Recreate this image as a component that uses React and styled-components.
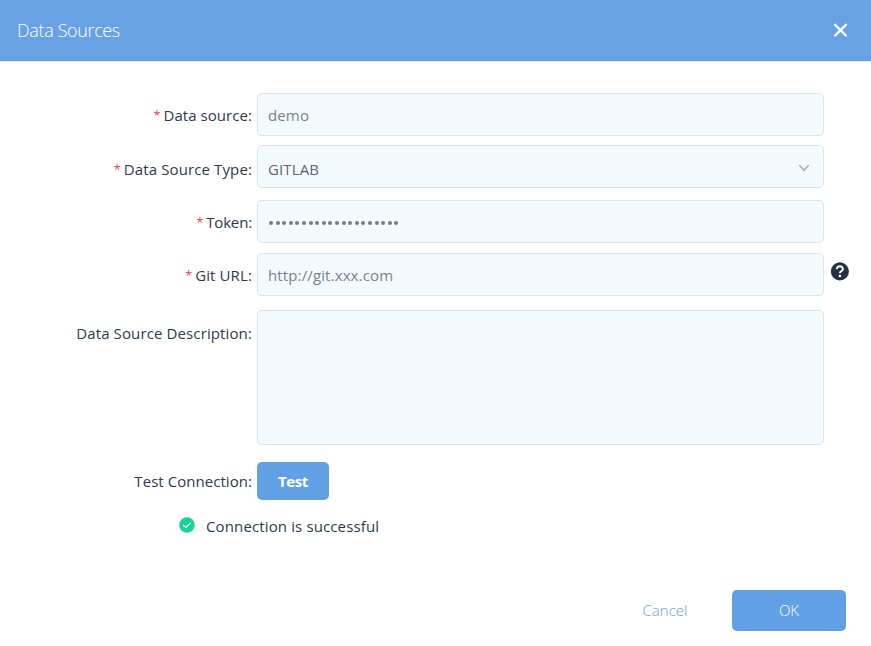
import React from "react";
import styled, { createGlobalStyle } from "styled-components";

const GlobalStyle = createGlobalStyle`
  * { box-sizing: border-box; }
  body { margin: 0; background: #fff; }
  button, input, textarea { font: inherit; }
`;

const Dialog = styled.div`
  display: flex;
  flex-direction: column;
  width: 871px;
  height: 646px;
  background: #fff;
  color: #2c3a4e;
  font-family: "Segoe UI", "Open Sans", "Noto Sans", sans-serif;
  font-size: 15px;
  font-weight: 370;
  overflow: hidden;
`;

const Header = styled.header`
  display: flex;
  align-items: center;
  justify-content: space-between;
  height: 62px;
  flex: none;
  padding: 0 23px 1px 17px;
  background: #69a1e5;
  border-bottom: 1px solid #e1eaf6;
`;

const Title = styled.h1`
  margin: 0;
  color: #fff;
  font-size: 18px;
  font-weight: 340;
  line-height: 24px;
  letter-spacing: -0.37px;
`;

const IconButton = styled.button`
  display: flex;
  padding: 0;
  border: 0;
  background: none;
`;

const Form = styled.form`
  display: flex;
  flex-direction: column;
  padding-top: 31px;
`;

const Row = styled.div`
  display: grid;
  grid-template-columns: 252px 567px 20px;
  column-gap: 5px;
  align-items: start;
  margin-bottom: ${(p) => p.$gap}px;
`;

const Label = styled.label`
  display: flex;
  justify-content: flex-end;
  padding-top: ${(p) => p.$top}px;
  line-height: 22px;
  letter-spacing: ${(p) => p.$track ?? 0.12}px;
  white-space: nowrap;
`;

const Required = styled.span`
  margin-right: 3px;
  color: #ff4040;
  font-size: 12.5px;
  line-height: 24px;
`;

const Field = styled.div`
  display: flex;
  align-items: center;
  justify-content: space-between;
  height: ${(p) => p.$height || 43}px;
  padding: ${(p) => p.$top || 1}px 13px 0 10px;
  border: 1px solid #d9e3f0;
  border-radius: 5px;
  background: #f5faff;
  color: ${(p) => p.$color || "#78818f"};
  letter-spacing: 0.13px;
`;

const Arrow = styled.span`
  display: flex;
  margin-bottom: 3px;
`;

const Dots = styled.span`
  display: flex;
  gap: 2.6px;
  padding: 2px 0 0 1px;
`;

const Dot = styled.i`
  width: 4px;
  height: 4px;
  border-radius: 50%;
  background: #727c8a;
`;

const Help = styled.span`
  display: flex;
  padding: 8px 0 0 1px;
`;

const TestButton = styled.button`
  width: 72px;
  height: 38px;
  padding: 0;
  border: 0;
  border-radius: 5px;
  background: #61a0e5;
  color: #fff;
  font-weight: 700;
  letter-spacing: -0.4px;
`;

const Status = styled.div`
  display: flex;
  align-items: center;
  gap: 11px;
  height: 22px;
  padding-left: 179px;
  line-height: 22px;
  letter-spacing: 0.13px;
  svg { margin-top: -3px; }
`;

const Footer = styled.footer`
  display: flex;
  justify-content: flex-end;
  margin-top: auto;
  padding: 0 25px 15px 0;
`;

const FooterButton = styled.button`
  width: 114px;
  height: 41px;
  padding: 0 0 2px;
  border: 0;
  border-radius: 5px;
  background: ${(p) => (p.$primary ? "#61a0e5" : "transparent")};
  color: ${(p) => (p.$primary ? "#fff" : "#61a0e5")};
  font-weight: 350;
  margin-left: 10px;
`;

const CloseIcon = () => (
  <svg width="15" height="15" viewBox="0 0 15 15" fill="none" stroke="#fff" strokeWidth="2.3">
    <path d="M1.4 1.1 13.6 13.3M13.6 1.1 1.4 13.3" />
  </svg>
);

const Chevron = () => (
  <svg width="12" height="8" viewBox="0 0 12 8" fill="none" stroke="#a7b6c9" strokeWidth="1.7">
    <path d="M1.2 1 6 6.4 10.8 1" />
  </svg>
);

const HelpIcon = () => (
  <svg width="20" height="20" viewBox="0 0 20 20" fill="none">
    <circle cx="10.4" cy="10.4" r="9.5" fill="#243044" />
    <path d="M7.2 8C7.3 6.1 8.5 5 10.3 5s3.3 1.1 3.3 2.8c0 2.1-3.2 2.2-3.2 4.6" stroke="#fff" strokeWidth="2.1" />
    <circle cx="10.4" cy="15.3" r="1.4" fill="#fff" />
  </svg>
);

const SuccessIcon = () => (
  <svg width="16" height="16" viewBox="0 0 16 16" fill="none">
    <circle cx="8" cy="8" r="7.8" fill="#20d09c" />
    <path d="m4.2 8 2.6 2.5 5-4.7" stroke="#e6fff6" strokeWidth="1.1" />
  </svg>
);

export default function App() {
  return (
    <>
      <GlobalStyle />
      <Dialog>
        <Header>
          <Title>Data Sources</Title>
          <IconButton aria-label="Close"><CloseIcon /></IconButton>
        </Header>
        <Form>
          <Row $gap={9}>
            <Label $top={11} $track={0.05}><Required>*</Required>Data source:</Label>
            <Field>demo</Field>
          </Row>
          <Row $gap={12}>
            <Label $top={13}><Required>*</Required>Data Source Type:</Label>
            <Field $top={5} $color="#5a6575">
              <span>GITLAB</span>
              <Arrow><Chevron /></Arrow>
            </Field>
          </Row>
          <Row $gap={10}>
            <Label $top={11} $track={-0.15}><Required>*</Required>Token:</Label>
            <Field>
              <Dots>{Array.from({ length: 20 }, (_, i) => <Dot key={i} />)}</Dots>
            </Field>
          </Row>
          <Row $gap={14}>
            <Label $top={11}><Required>*</Required>Git URL:</Label>
            <Field>http://git.xxx.com</Field>
            <Help><HelpIcon /></Help>
          </Row>
          <Row $gap={17}>
            <Label $top={12}>Data Source Description:</Label>
            <Field $height={135} />
          </Row>
          <Row $gap={15}>
            <Label $top={8} $track={0.05}>Test Connection:</Label>
            <TestButton type="button">Test</TestButton>
          </Row>
          <Status><SuccessIcon />Connection is successful</Status>
        </Form>
        <Footer>
          <FooterButton>Cancel</FooterButton>
          <FooterButton $primary>OK</FooterButton>
        </Footer>
      </Dialog>
    </>
  );
}
